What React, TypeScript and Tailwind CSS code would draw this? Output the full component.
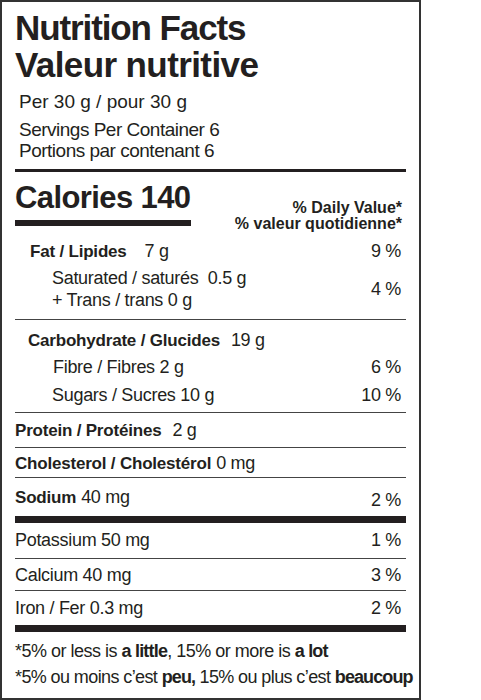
const sans = "font-['Liberation_Sans',Arial,sans-serif]";

function Rule({ className }: { className: string }) {
    return <div className={className} />;
}

function Row({
    label,
    amount,
    dv,
    indent = "",
    bold = false,
    gap = "ml-[5px]",
    className = "",
}: {
    label: string;
    amount?: string;
    dv?: string;
    indent?: string;
    bold?: boolean;
    gap?: string;
    className?: string;
}) {
    return (
        <div className={`flex h-[22px] items-center justify-between leading-[22px] ${className}`}>
            <span className={indent}>
                <span className={bold ? "text-[17px] font-bold tracking-[-0.2px]" : ""}>{label}</span>
                {amount && <span className={gap}>{amount}</span>}
            </span>
            {dv && <span className="pr-[5px]">{dv}</span>}
        </div>
    );
}

export default function App() {
    return (
        <div className={`${sans} h-[700px] w-[421px] border-2 border-[#333] bg-white px-[13px] text-[#231f20]`}>
            {/* Title */}
            <div className="pt-[7px] text-[35px] font-bold leading-[37px]">
                <div className="tracking-[-1.1px]">Nutrition Facts</div>
                <div className="tracking-[-0.6px]">Valeur nutritive</div>
            </div>

            {/* Serving */}
            <div className="mt-[8px] pl-[4px] text-[19px] leading-[22px] tracking-[0px]">
                Per 30 g / pour 30 g
            </div>
            <div className="mt-[6px] pl-[4px] text-[19px] leading-[21px] tracking-[-0.5px]">
                <div>Servings Per Container 6</div>
                <div>Portions par contenant 6</div>
            </div>
            <Rule className="mt-[8px] h-[3px] bg-[#231f20]" />

            {/* Calories */}
            <div className="flex h-[59px] items-start justify-between">
                <div className="w-[176px] pt-[10px]">
                    <div className="text-[31px] font-bold leading-[32px] tracking-[-0.6px]">Calories 140</div>
                    <div className="mt-[6px] h-[6px] bg-[#231f20]" />
                </div>
                <div className="pt-[28px] pr-[4px] text-right text-[16px] font-bold leading-[16px]">
                    <div>% Daily Value*</div>
                    <div>% valeur quotidienne*</div>
                </div>
            </div>

            {/* Fat */}
            <div className="mt-[9px] text-[18px] tracking-[-0.3px]">
                <div className="flex h-[22px] items-center justify-between leading-[22px]">
                    <span className="pl-[15px]">
                        <span className="text-[17px] font-bold tracking-[-0.2px]">Fat / Lipides</span>
                        <span className="ml-[18px]">7 g</span>
                    </span>
                    <span className="pr-[5px]">9 %</span>
                </div>
                <div className="mt-[5px] flex items-center justify-between leading-[22px]">
                    <div className="pl-[37px]">
                        <div>Saturated / saturés&nbsp;&nbsp;0.5 g</div>
                        <div>+ Trans / trans 0 g</div>
                    </div>
                    <span className="pr-[5px]">4 %</span>
                </div>
                <Rule className="mt-[8px] h-px bg-[#444]" />

                {/* Carbs */}
                <Row label="Carbohydrate / Glucides" amount="19 g" bold gap="ml-[11px]" indent="pl-[13px]" className="mt-[9px]" />
                <Row label="Fibre / Fibres 2 g" dv="6 %" indent="pl-[38px]" className="mt-[5px]" />
                <Row label="Sugars / Sucres 10 g" dv="10 %" indent="pl-[37px]" className="mt-[6px]" />
                <Rule className="mt-[6px] h-px bg-[#444]" />

                <Row label="Protein / Protéines" amount="2 g" bold gap="ml-[11px]" className="mt-[6px]" />
                <Rule className="mt-[6px] h-px bg-[#444]" />
                <Row label="Cholesterol / Cholestérol" amount="0 mg" bold className="mt-[4px]" />
                <Rule className="mt-[3px] h-px bg-[#444]" />
                <div className="mt-[8px] flex h-[22px] justify-between leading-[22px]">
                    <span>
                        <span className="text-[17px] font-bold tracking-[-0.2px]">Sodium</span>
                        <span className="ml-[5px]">40 mg</span>
                    </span>
                    <span className="mt-[3px] pr-[5px]">2 %</span>
                </div>
                <Rule className="mt-[8px] h-[7px] bg-[#231f20]" />

                <Row label="Potassium 50 mg" dv="1 %" className="mt-[6px]" />
                <Rule className="mt-[7px] h-px bg-[#444]" />
                <Row label="Calcium 40 mg" dv="3 %" className="mt-[5px]" />
                <Rule className="mt-[4px] h-px bg-[#444]" />
                <Row label="Iron / Fer 0.3 mg" dv="2 %" className="mt-[6px]" />
                <Rule className="mt-[6px] h-[7px] bg-[#231f20]" />

                {/* Footnote */}
                <div className="mt-[8px] leading-[22px] tracking-[-0.5px]">
                    *5% or less is <b className="tracking-[-0.8px]">a little</b>, 15% or more is{" "}
                    <b className="tracking-[-0.8px]">a lot</b>
                </div>
                <div className="mt-[4px] whitespace-nowrap leading-[22px] tracking-[-0.6px]">
                    *5% ou moins c’est <b className="tracking-[-0.9px]">peu,</b> 15% ou plus c’est{" "}
                    <b className="tracking-[-0.9px]">beaucoup</b>
                </div>
            </div>
        </div>
    );
}
